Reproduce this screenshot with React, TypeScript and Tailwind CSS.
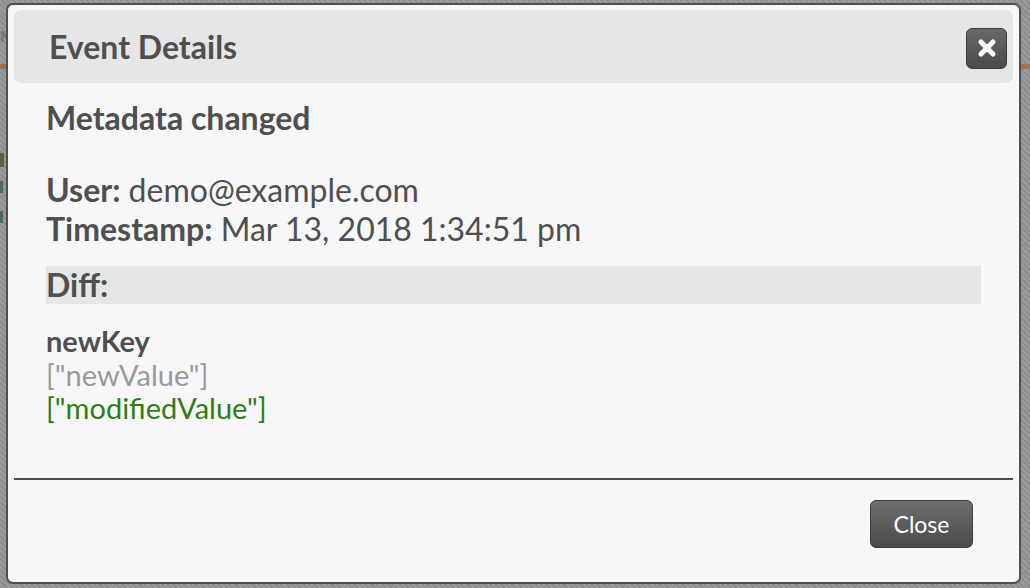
import { useState } from 'react'

const CloseIcon = () => (
  <svg width="20" height="20" viewBox="0 0 20 20" fill="none">
    <path d="M4 4 L16 16 M16 4 L4 16" stroke="#fff" strokeWidth="5" strokeLinecap="round" />
  </svg>
)

const App = () => {
  const [open] = useState(true)

  return (
    <div
      className="relative w-[1030px] h-[588px] overflow-hidden bg-[repeating-linear-gradient(45deg,#8e8e8e_0px,#8e8e8e_2px,#9b9b9b_2px,#9b9b9b_4px)]"
      style={{ fontFamily: 'Lato, "Open Sans", sans-serif' }}
    >
      {/* page behind the overlay */}
      <div className="pt-[28px] pl-0 text-[#5a6a78]/70 text-[16px] font-bold leading-none">M</div>
      <div className="mt-[20px] h-[5px] w-full bg-[#a5714f]" />
      <div className="mt-[84px] w-[4px] h-[14px] bg-[#4d6b3a]" />
      <div className="mt-[14px] w-[3px] h-[12px] bg-[#4d6b5a]" />
      <div className="mt-[18px] w-[3px] h-[12px] bg-[#4d6b5a]" />

      {open && (
        <div className="absolute left-[6px] top-[3px] w-[1015px] h-[581px] flex flex-col rounded-[7px] border-2 border-[#505050] bg-[#f7f7f9] text-[#4f4f4f]">
          {/* header */}
          <div className="mx-[6px] mt-[5px] h-[73px] flex items-center justify-between rounded-[7px] bg-[#e6e6e6] pl-[35px] pr-[6px]">
            <h1 className="text-[32px] font-bold leading-none">Event Details</h1>
            <button className="mt-[3px] w-[41px] h-[41px] flex items-center justify-center rounded-[6px] border border-[#3c3c3c] bg-gradient-to-b from-[#6a6a6a] to-[#4a4a4a]">
              <CloseIcon />
            </button>
          </div>

          {/* body */}
          <div className="flex-1 px-[38px]">
            <h2 className="mt-[16px] text-[32px] leading-[38px] font-bold">Metadata changed</h2>

            <div className="mt-[33px] text-[32px] leading-[39px]">
              <div>
                <span className="font-bold">User:</span> demo@example.com
              </div>
              <div>
                <span className="font-bold">Timestamp:</span> Mar 13, 2018 1:34:51 pm
              </div>
            </div>

            <div className="mt-[18px] h-[38px] bg-[#e6e6e6] text-[32px] leading-[38px] font-bold">Diff:</div>

            <div className="mt-[20px] text-[29px] leading-[33.5px]">
              <div className="font-bold">newKey</div>
              <div className="text-[#9a9a9a]">["newValue"]</div>
              <div className="text-[#2f7d12]">["modifiedValue"]</div>
            </div>
          </div>

          {/* footer */}
          <div className="mx-[6px] h-[2px] bg-[#505050]" />
          <div className="flex justify-end pt-[20px] pb-[34px] pr-[46px]">
            <button className="w-[103px] h-[48px] rounded-[6px] border border-[#3c3c3c] bg-gradient-to-b from-[#6e6e6e] to-[#4b4b4b] text-white text-[23px]">
              Close
            </button>
          </div>
        </div>
      )}
    </div>
  )
}

export default App
